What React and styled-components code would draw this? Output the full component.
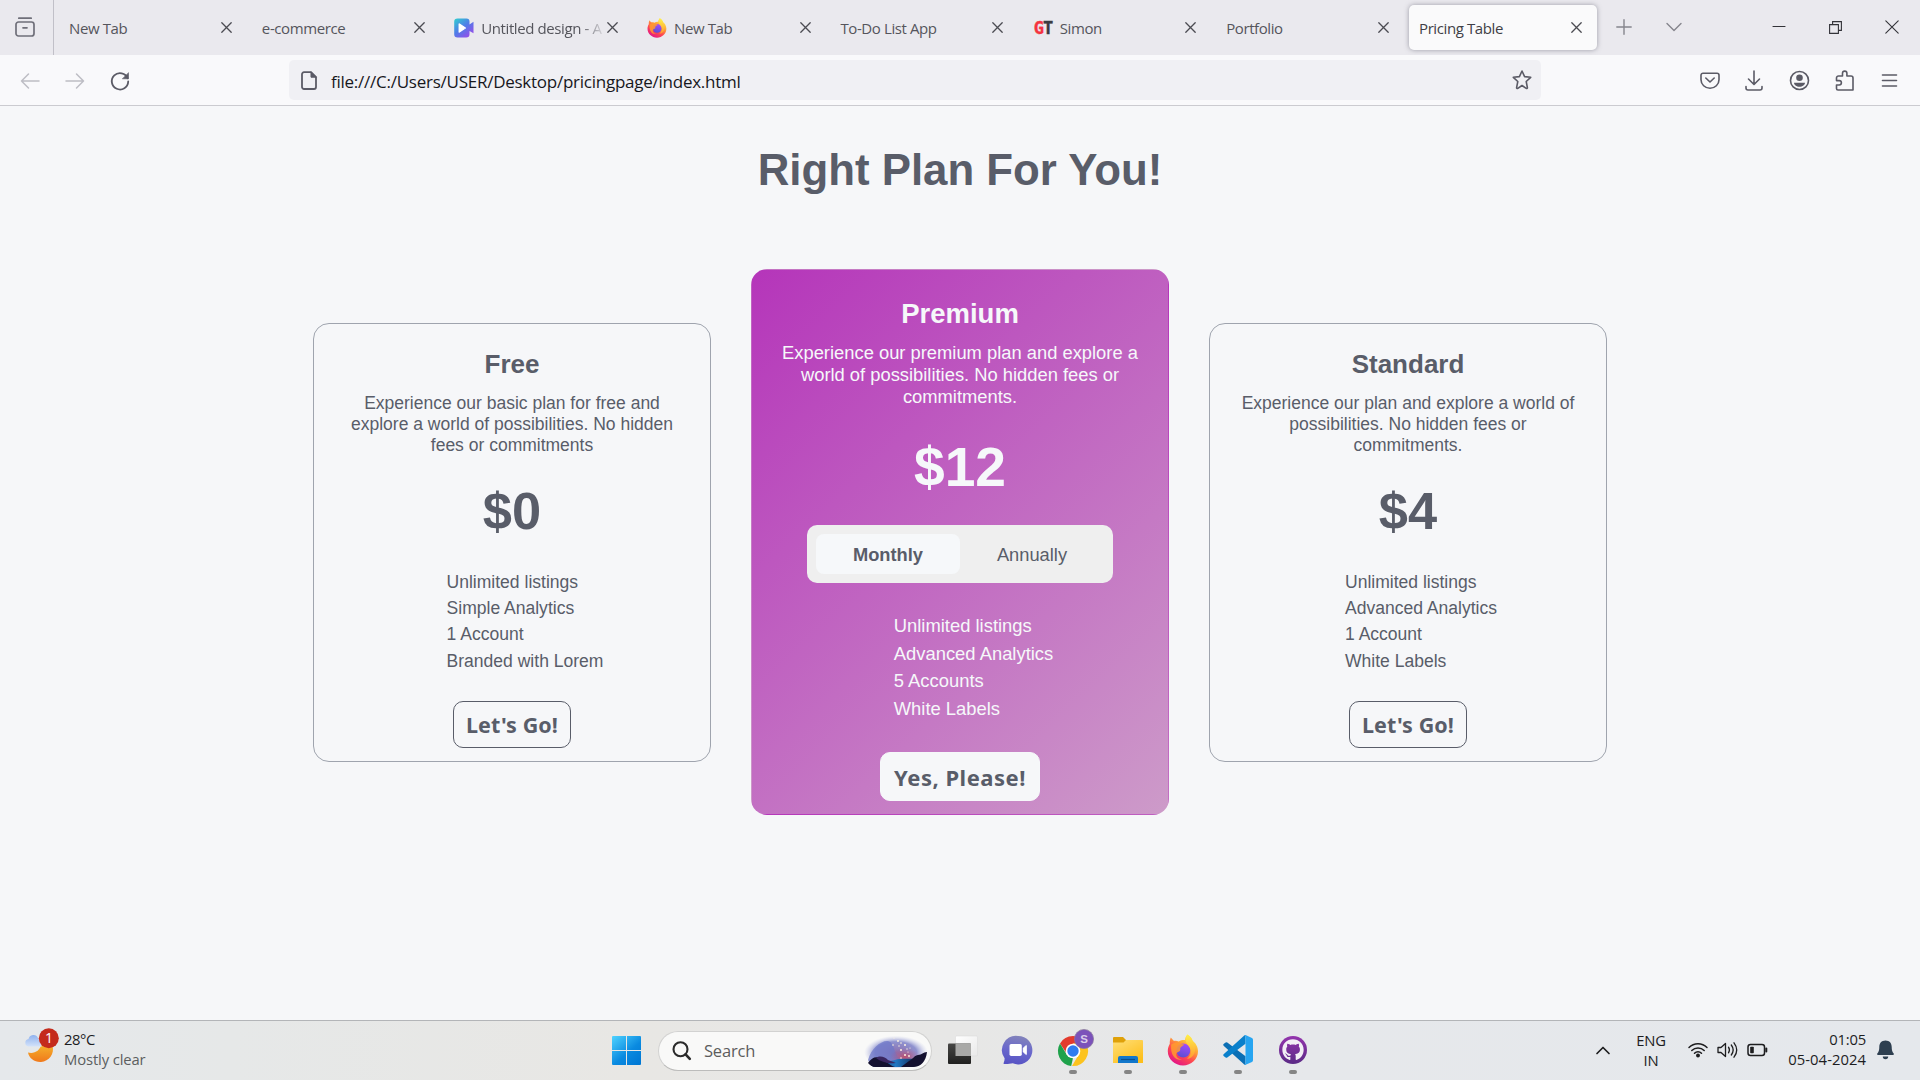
import React from "react";
import styled, { createGlobalStyle, css } from "styled-components";
import { FaGithub } from "react-icons/fa";

const UI = '"Open Sans", "Noto Sans", sans-serif';
const ARIAL = '"Liberation Sans", Arial, sans-serif';
const INK = "#595d69";
const PAPER = "#f6f7f9";

const Global = createGlobalStyle`
  * { box-sizing: border-box; }
  html, body { margin: 0; padding: 0; }
  body { width: 1920px; height: 1080px; overflow: hidden; background: ${PAPER}; }
  h1, h2, p, ul { margin: 0; padding: 0; }
  svg { display: block; flex: none; overflow: visible; }
`;

const Screen = styled.div`
  width: 1920px;
  height: 1080px;
  display: flex;
  flex-direction: column;
  background: ${PAPER};
  font-family: ${UI};
`;

/* ---------- browser chrome ---------- */

const TabStrip = styled.div`
  height: 55px;
  flex: none;
  display: flex;
  align-items: center;
  background: #eae9ee;
`;

const TabsMenu = styled.div`
  width: 54px;
  height: 55px;
  padding: 0 0 1px 15px;
  display: flex;
  align-items: center;
  border-right: 1px solid #c1c0c8;
  margin-right: 5px;
`;

const Tabs = styled.div`
  display: flex;
  gap: 4.86px;
`;

const Tab = styled.div`
  width: 188px;
  height: 45px;
  padding: 0 15px 0 ${(p) => (p.$icon ? 9.5 : 10)}px;
  display: flex;
  align-items: center;
  gap: 7px;
  border-radius: 5px;
  color: #55555c;
  ${(p) =>
    p.$active &&
    css`
      background: #fafafb;
      color: #3f3f46;
      box-shadow: 0 0 5px rgba(90, 90, 105, 0.55);
    `}
`;

const TabTitle = styled.span`
  flex: 1;
  min-width: 0;
  overflow: hidden;
  white-space: nowrap;
  font-size: 15px;
  line-height: 22px;
  letter-spacing: -0.4px;
  ${(p) =>
    p.$fade &&
    css`
      mask-image: linear-gradient(to right, #000 80%, transparent 100%);
      margin-right: -6px;
    `}
`;

const StripTools = styled.div`
  display: flex;
  align-items: center;
  margin-left: 19px;
  gap: 34px;
  padding-bottom: 1px;
`;

const WindowTools = styled.div`
  display: flex;
  align-items: center;
  margin-left: auto;
  margin-right: 21.5px;
  gap: 43px;
  padding-bottom: 1px;
`;

const Toolbar = styled.div`
  height: 51px;
  flex: none;
  display: flex;
  align-items: center;
  padding: 0 20px;
  background: #f9f9fb;
  border-bottom: 1px solid #cbcbd0;
`;

const NavGroup = styled.div`
  width: 269px;
  padding-top: 1px;
  display: flex;
  align-items: center;
  gap: 25px;
`;

const UrlBar = styled.div`
  width: 1252px;
  height: 40px;
  padding: 0 9px 0 12px;
  display: flex;
  align-items: center;
  border-radius: 5px;
  background: #f0f0f4;
`;

const Url = styled.span`
  flex: 1;
  margin-left: 14px;
  padding-top: 3px;
  font-size: 17px;
  letter-spacing: -0.25px;
  color: #17171c;
  white-space: nowrap;
`;

const ToolGroup = styled.div`
  margin-left: auto;
  padding-top: 1px;
  display: flex;
  align-items: center;
  gap: 23.6px;
`;

/* ---------- pricing page ---------- */

const Page = styled.main`
  flex: 1;
  display: flex;
  flex-direction: column;
  align-items: center;
  padding-top: 39px;
  font-family: ${ARIAL};
  color: ${INK};
`;

const Heading = styled.h1`
  font-size: 43.8px;
  line-height: 50px;
  font-weight: 700;
`;

const Plans = styled.div`
  margin-top: 74px;
  display: flex;
  align-items: center;
  gap: 40px;
`;

const Card = styled.section`
  width: ${(p) => (p.$featured ? 418 : 398)}px;
  height: ${(p) => (p.$featured ? 546 : 439)}px;
  padding-top: ${(p) => (p.$featured ? 28 : 25)}px;
  display: flex;
  flex-direction: column;
  align-items: center;
  border: 1px solid #9fa4ae;
  border-radius: 16px;
  ${(p) =>
    p.$featured &&
    css`
      border-color: transparent;
      color: #f6f8fa;
      background-image: linear-gradient(137deg, #b535ba, #cd9bc9);
    `}
`;

const PlanName = styled.h2`
  font-size: ${(p) => (p.$featured ? 27.5 : 26)}px;
  line-height: ${(p) => (p.$featured ? 32 : 30)}px;
`;

const Blurb = styled.p`
  margin-top: ${(p) => (p.$featured ? 12 : 14)}px;
  font-size: ${(p) => (p.$featured ? 18.35 : 17.5)}px;
  line-height: ${(p) => (p.$featured ? 22 : 21)}px;
  text-align: center;
  white-space: pre-line;
`;

const Price = styled.div`
  margin-top: ${(p) => (p.$featured ? 27 : 25)}px;
  font-size: ${(p) => (p.$featured ? 55.2 : 52.4)}px;
  line-height: ${(p) => (p.$featured ? 64 : 60)}px;
  font-weight: 700;
`;

const Toggle = styled.div`
  width: 306px;
  height: 58px;
  margin-top: 26px;
  padding: 9px;
  display: flex;
  border-radius: 10px;
  background: #efefef;
`;

const ToggleOption = styled.div`
  flex: 1;
  display: flex;
  align-items: center;
  justify-content: center;
  padding-top: 1.5px;
  border-radius: 8px;
  font-size: 18.3px;
  line-height: 22px;
  color: ${INK};
  ${(p) =>
    p.$on &&
    css`
      background: #f6f8fa;
      font-weight: 700;
    `}
`;

const Features = styled.ul`
  list-style: none;
  height: ${(p) => (p.$featured ? 111 : 105)}px;
  margin-top: ${(p) => (p.$featured ? 29.2 : 28)}px;
  padding-left: ${(p) => (p.$featured ? 27 : 26)}px;
  font-size: ${(p) => (p.$featured ? 18.4 : 17.55)}px;
  line-height: ${(p) => (p.$featured ? 27.6 : 26.4)}px;
`;

const Button = styled.button`
  width: ${(p) => (p.$featured ? 160 : 118)}px;
  height: ${(p) => (p.$featured ? 49 : 47)}px;
  margin-top: ${(p) => (p.$featured ? 28.8 : 27)}px;
  padding: 1px 0 0;
  border: 1px solid ${(p) => (p.$featured ? "#f6f8fa" : INK)};
  border-radius: 10px;
  background: ${PAPER};
  color: ${INK};
  font-family: "Noto Sans", sans-serif;
  font-weight: 700;
  font-size: ${(p) => (p.$featured ? 22 : 21.5)}px;
  letter-spacing: ${(p) => (p.$featured ? 0.5 : 0.1)}px;
  white-space: nowrap;
`;

/* ---------- taskbar ---------- */

const Taskbar = styled.footer`
  height: 60px;
  flex: none;
  display: flex;
  align-items: center;
  border-top: 1px solid #b3b5b8;
  background: linear-gradient(to right, #e5e8eb 0%, #e6e8e8 12%, #e8e7e4 33%, #e7e7e6 50%, #e6e8eb 68%, #e5e8ec 100%);
  color: #1d1d1f;
`;

const Weather = styled.div`
  width: 612px;
  padding-left: 24px;
  display: flex;
  align-items: center;
  gap: 4px;
`;

const Lines = styled.div`
  display: flex;
  flex-direction: column;
  align-items: ${(p) => p.$align || "flex-start"};
  width: ${(p) => p.$w || "auto"};
  padding-bottom: ${(p) => p.$lift ?? 3}px;
  font-size: 14.8px;
  line-height: 20px;
  white-space: nowrap;
`;

const Line = styled.span`
  color: ${(p) => (p.$dim ? "#5c5e60" : "#1d1d1f")};
  letter-spacing: ${(p) => p.$ls ?? -0.4}px;
`;

const SearchBox = styled.div`
  width: 274px;
  height: 40px;
  margin: 0 15px 0 17px;
  padding: 0 3px 0 13px;
  display: flex;
  align-items: center;
  border: 1px solid #d2d2d1;
  border-bottom-color: #bcbcbb;
  border-radius: 20px;
  background: #f9f9f8;
`;

const SearchText = styled.span`
  flex: 1;
  margin-left: 13px;
  font-size: 16.5px;
  letter-spacing: -0.2px;
  color: #5d5d5d;
`;

const Apps = styled.div`
  display: flex;
  gap: 23px;
`;

const AppSlot = styled.div`
  width: 32px;
  height: 59px;
  display: flex;
  flex-direction: column;
  align-items: center;
  padding-top: 13px;

  &::after {
    content: "";
    width: 8px;
    height: 4px;
    margin-top: 4px;
    border-radius: 2px;
    background: ${(p) => (p.$running ? "#858585" : "transparent")};
  }
`;

const GithubDisc = styled.div`
  width: 28px;
  height: 28px;
  margin: 2px;
  display: flex;
  align-items: center;
  justify-content: center;
  border-radius: 50%;
  background: linear-gradient(#9334ad, #5b2a86);
  color: #f2eef5;
`;

const Tray = styled.div`
  margin-left: auto;
  padding: 0 26px 1px 0;
  display: flex;
  align-items: center;
`;

const Status = styled.div`
  display: flex;
  align-items: center;
  gap: 9px;
  margin-left: -4px;
`;

const Bell = styled.div`
  margin-left: 11px;
`;

/* ---------- icons ---------- */

const Svg = ({ w, h, box, sw = 1.6, c = "#5b5b66", children, ...rest }) => (
  <svg width={w} height={h || w} viewBox={box || `0 0 ${w} ${h || w}`} fill="none" stroke={c} strokeWidth={sw} strokeLinecap="round" strokeLinejoin="round" {...rest}>
    {children}
  </svg>
);

const Cross = ({ size = 11, c = "#4b4b52", sw = 1.3 }) => (
  <Svg w={size} c={c} sw={sw}>
    <path d={`M.8 .8 ${size - 0.8} ${size - 0.8}M${size - 0.8} .8 .8 ${size - 0.8}`} />
  </Svg>
);

const FirefoxIcon = ({ size }) => (
  <svg width={size} height={size} viewBox="0 0 32 32">
    <defs>
      <linearGradient id="fxBody" x1=".8" y1=".05" x2=".25" y2=".95">
        <stop offset="0" stopColor="#fff44f" />
        <stop offset=".35" stopColor="#ffa436" />
        <stop offset=".65" stopColor="#ff4a4f" />
        <stop offset="1" stopColor="#e31587" />
      </linearGradient>
      <linearGradient id="fxGlobe" x1=".7" y1="0" x2=".4" y2="1">
        <stop offset="0" stopColor="#a54bff" />
        <stop offset="1" stopColor="#5b4fd0" />
      </linearGradient>
      <linearGradient id="fxFlame" x1="0" y1="0" x2="0" y2="1">
        <stop offset="0" stopColor="#fff14a" />
        <stop offset="1" stopColor="#ff9a30" />
      </linearGradient>
    </defs>
    <path fill="url(#fxBody)" d="M20.500.5c3.500 2.300 4.500 4.500 5.200 6.400 2.800 1.700 5.300 5.900 5.300 10.400C31 25.200 24.300 31.500 16 31.500S.8 25.200.8 17.300c0-3 .8-5.300 2-7.500-.2-2.300.2-4.300 1-6.300 1 1.300 2 2.500 3.200 3.400 1.700-.3 3.300 0 4.800.6 2.100-1.400 4.300-1.600 6.200-1.400.2-2.100.9-4 2.500-5.600Z" />
    <circle cx="16.300" cy="16.500" r="7" fill="url(#fxGlobe)" />
    <path fill="#ff9b2f" d="M4.200 10.500c3-2 6-2.600 8.300-1.600 1.300.6 2.500 1.300 4.700 1.400-.7 1.800-2.700 2-3.600 3.200-.9 1.200.3 2.200-.8 3.400-.8.9-2.500.7-3.300 2.300-1 3 1.600 6 5.400 6.300-6 1.500-11.900-4-10.700-15Z" opacity=".85" />
    <path fill="url(#fxFlame)" d="M20.500.5c3.500 2.300 4.500 4.500 5.200 6.400 2.500 3.300 3.600 8 1.600 12.500-1.500 3.300-4.300 5.200-7.500 5.600 3.500-2.600 4.600-6.200 3.600-9.700-.8-2.700-2.800-4.400-4.200-6.700C18.100 6 18.600 2.700 20.500.5Z" />
  </svg>
);

const VideoIcon = () => (
  <svg width="20" height="20" viewBox="0 0 20 20">
    <defs>
      <linearGradient id="clip" x1="0" y1="0" x2=".8" y2="1">
        <stop offset="0" stopColor="#2fd0cf" />
        <stop offset=".5" stopColor="#4f7de8" />
        <stop offset="1" stopColor="#9b4bea" />
      </linearGradient>
    </defs>
    <path fill="url(#clip)" d="M3.500.500h9a3 3 0 0 1 3 3v3l4-2.700v11.500l-4-2.300v3.200a3.300 3.300 0 0 1-3.300 3.300H3.500a3.300 3.300 0 0 1-3.300-3.300V3.800A3.300 3.300 0 0 1 3.500.5Z" />
    <path fill="#fff" stroke="#fff" strokeWidth="1.500" strokeLinejoin="round" d="m5.300 6 6 4-6 4Z" />
  </svg>
);

const GtMark = styled.span`
  width: 19px;
  margin-right: 1px;
  padding-left: 1px;
  font: 700 17px/20px "DejaVu Sans Mono", monospace;
  letter-spacing: -1.1px;
  color: #3b3b41;
  -webkit-text-stroke: 0.4px;
  b { color: #f5333f; }
`;

const WeatherIcon = () => (
  <svg width="36" height="44" viewBox="0 0 36 44">
    <defs>
      <linearGradient id="moon" x1="0" y1="0" x2="0" y2="1">
        <stop offset="0" stopColor="#f5b52c" />
        <stop offset="1" stopColor="#f0791c" />
      </linearGradient>
      <linearGradient id="cloud" x1="0" y1="0" x2="0" y2="1">
        <stop offset="0" stopColor="#8fb2ee" />
        <stop offset="1" stopColor="#d3e2fa" />
      </linearGradient>
    </defs>
    <path fill="url(#moon)" d="M4 23.500c6 1.600 12-1.500 13.500-8.500l11 2c2.300 7.500-3.500 15.500-11.500 16-6.500.3-12-3.800-13-9.500Z" />
    <path fill="url(#cloud)" d="M4.500 17.500a3.800 3.800 0 0 1 0-7.500 5 5 0 0 1 9.500-1l4 8.500Z" />
    <circle cx="24.800" cy="9.300" r="10" fill="#c42b1c" />
    <text x="24.900" y="14.200" textAnchor="middle" fontFamily="Open Sans" fontSize="14" fill="#fff">1</text>
  </svg>
);

const StartIcon = () => (
  <svg width="29" height="29" viewBox="0 0 29 29">
    <defs>
      <linearGradient id="win" gradientUnits="userSpaceOnUse" x1="0" y1="0" x2="25" y2="29">
        <stop offset="0" stopColor="#4fd3ff" />
        <stop offset=".6" stopColor="#0a8ae0" />
        <stop offset="1" stopColor="#0078d4" />
      </linearGradient>
    </defs>
    <path fill="url(#win)" d="M1 0h13v14H0V1a1 1 0 0 1 1-1ZM15 0h13a1 1 0 0 1 1 1v13H15ZM0 15h14v14H1a1 1 0 0 1-1-1ZM15 15h14v13a1 1 0 0 1-1 1H15Z" />
  </svg>
);

const SearchArt = () => (
  <svg width="64" height="34" viewBox="0 0 64 34">
    <defs>
      <radialGradient id="sky" cx=".5" cy=".55" r=".5">
        <stop offset="0" stopColor="#8c6fae" />
        <stop offset=".65" stopColor="#8f92cf" />
        <stop offset="1" stopColor="#c9cdea" stopOpacity="0" />
      </radialGradient>
      <radialGradient id="glow">
        <stop offset="0" stopColor="#c4475f" stopOpacity=".85" />
        <stop offset="1" stopColor="#b0568a" stopOpacity="0" />
      </radialGradient>
      <linearGradient id="sea" x1="0" y1="0" x2="1" y2="0">
        <stop offset="0" stopColor="#1a1a4a" />
        <stop offset=".5" stopColor="#1f78c4" />
        <stop offset="1" stopColor="#141336" />
      </linearGradient>
    </defs>
    <ellipse cx="32" cy="17" rx="32" ry="17" fill="url(#sky)" />
    <path fill="#6f78c8" opacity=".75" d="M4 26C7 14 18 6 24 7c7 2 5 12 12 18l-10 5H6Z" />
    <ellipse cx="41" cy="23" rx="15" ry="9" fill="url(#glow)" />
    <path fill="url(#sea)" d="M5 29c8-5 18 0 26-3s20 1 27-4c-2 8-6 11-12 11H12c-4 0-6-2-7-4Z" />
    <path fill="#14112f" d="M4 29c4-6 9-7 13-4 5 2 8 6 14 8H12c-4 0-6-2-8-4ZM63 18c-4 0-5 3-9 3-3 0-5 4-9 6l-8 6h12c8 0 13-6 14-15Z" />
    <path fill="#3a2660" d="M12 24c4-3 9-1 12 2l8 3c-8 1-15-1-20-5Z" />
    <g fill="#fff3e0">
      <circle cx="30" cy="4" r=".6" /><circle cx="34" cy="7" r=".9" /><circle cx="29" cy="11" r=".8" />
      <circle cx="37" cy="9" r=".8" /><circle cx="41" cy="11" r="1" /><circle cx="35" cy="12" r=".7" />
      <circle cx="43" cy="15" r=".7" /><circle cx="37" cy="16" r="1" /><circle cx="46" cy="14" r=".6" />
      <circle cx="41" cy="21" r="1" /><circle cx="45" cy="22" r=".9" /><circle cx="37" cy="24" r=".8" /><circle cx="44" cy="18" r=".6" />
    </g>
  </svg>
);

const TaskViewIcon = () => (
  <svg width="32" height="32" viewBox="0 0 32 32">
    <defs>
      <linearGradient id="tvd" x1="0" y1="0" x2="0" y2="1">
        <stop offset="0" stopColor="#474745" />
        <stop offset="1" stopColor="#20201f" />
      </linearGradient>
      <linearGradient id="tvl" x1="0" y1="0" x2="1" y2="1">
        <stop offset="0" stopColor="#fff" />
        <stop offset="1" stopColor="#e9e9e9" />
      </linearGradient>
    </defs>
    <rect x="8.500" y="2" width="22" height="20" rx="1" fill="url(#tvl)" stroke="#dcdcdc" strokeWidth=".6" />
    <rect x="1" y="9.500" width="23" height="20.500" rx="1" fill="url(#tvd)" />
    <rect x="8.500" y="9.500" width="15.500" height="12.500" fill="#a9a9a7" />
  </svg>
);

const ChatIcon = () => (
  <svg width="32" height="32" viewBox="0 0 32 32">
    <defs>
      <linearGradient id="chat" x1=".6" y1="0" x2=".4" y2="1">
        <stop offset="0" stopColor="#8384ba" />
        <stop offset=".5" stopColor="#6a68cc" />
        <stop offset="1" stopColor="#5753c4" />
      </linearGradient>
    </defs>
    <path fill="url(#chat)" d="M16 2a14.200 14.200 0 1 1-5.300 27.300C8 30 4 30.300 2 30c-.7-.1-.5-.9-.2-1.500.5-1 .9-2.500.8-4.200A14.200 14.200 0 0 1 16 2Z" />
    <rect x="7.500" y="10" width="12.300" height="12" rx="1.700" fill="#fff" />
    <path fill="#fff" stroke="#fff" strokeLinejoin="round" d="m21.300 14 3-2.500v9l-3-2.500Z" />
  </svg>
);

const ChromeIcon = () => (
  <svg width="32" height="32" viewBox="0 0 32 32">
    <path fill="#e33b2e" d="M3 9.500a15 15 0 0 1 26 0H16L10 20Z" />
    <path fill="#1fa24b" d="M3 9.500 9.800 20.800 16 24l-1.800 8A15 15 0 0 1 3 9.500Z" />
    <path fill="#fcc31e" d="M29 9.500A15 15 0 0 1 15 32l6.800-11.500L16 9.500Z" />
    <circle cx="16" cy="17" r="7.300" fill="#fff" />
    <circle cx="16" cy="17" r="5.700" fill="#2f7cf0" />
    <circle cx="27" cy="5" r="9.600" fill="#7b52ba" stroke="#8a7a9a" strokeWidth=".7" />
    <text x="27" y="9" textAnchor="middle" fontFamily="Liberation Sans" fontSize="11.500" fontWeight="700" fill="#d9cdea">S</text>
  </svg>
);

const FolderIcon = () => (
  <svg width="32" height="32" viewBox="0 0 32 32">
    <defs>
      <linearGradient id="fold" x1="0" y1="0" x2=".7" y2="1">
        <stop offset="0" stopColor="#ffdf78" />
        <stop offset="1" stopColor="#fdbf1c" />
      </linearGradient>
    </defs>
    <path fill="#dfa10a" d="M2 3h9l3 3v4H1V4a1 1 0 0 1 1-1Z" />
    <path fill="url(#fold)" d="M14 6h16a1 1 0 0 1 1 1v22H1V8.500h10.500Z" />
    <path fill="#1277cb" d="M6 29v-5a2 2 0 0 1 2-2h16a2 2 0 0 1 2 2v5Z" />
    <path stroke="#0a4f8e" strokeWidth="1.200" d="M9 25.500h14" />
  </svg>
);

const CodeIcon = () => (
  <svg width="32" height="32" viewBox="0 0 32 32">
    <path fill="#0b6fb5" d="M3.600 8.600a1.300 1.300 0 0 1 1.700 0L23.500 22.300V31c-.6 0-1-.2-1.500-.7L1.600 11.700a1.200 1.200 0 0 1 0-1.700Z" />
    <path fill="#0a80cb" d="M3.600 23.400a1.300 1.300 0 0 0 1.700 0L23.500 9.700V1c-.6 0-1 .2-1.500.7L1.600 20.300a1.200 1.200 0 0 0 0 1.700Z" />
    <path fill="#27a5f1" d="M23 31c-.5.100-.8 0-1.300-.7.700.7 1.800.2 1.800-.8v-27c0-1-1.100-1.500-1.800-.8.500-.7.800-.8 1.800-.6l6.500 3c.6.300 1 .9 1 1.600v20.600c0 .7-.4 1.300-1 1.600Z" />
  </svg>
);

const TABS = [
  { title: "New Tab" },
  { title: "e-commerce" },
  { title: "Untitled design - A", icon: <VideoIcon />, fade: true },
  { title: "New Tab", icon: <FirefoxIcon size={20} /> },
  { title: "To-Do List App" },
  { title: "Simon", icon: <GtMark><b>G</b>T</GtMark> },
  { title: "Portfolio" },
  { title: "Pricing Table", active: true },
];

const PLANS = [
  {
    name: "Free",
    blurb: "Experience our basic plan for free and\nexplore a world of possibilities. No hidden\nfees or commitments",
    price: "$0",
    features: ["Unlimited listings", "Simple Analytics", "1 Account", "Branded with Lorem"],
    action: "Let's Go!",
  },
  {
    name: "Premium",
    featured: true,
    blurb: "Experience our premium plan and explore a\nworld of possibilities. No hidden fees or\ncommitments.",
    price: "$12",
    features: ["Unlimited listings", "Advanced Analytics", "5 Accounts", "White Labels"],
    action: "Yes, Please!",
  },
  {
    name: "Standard",
    blurb: "Experience our plan and explore a world of\npossibilities. No hidden fees or\ncommitments.",
    price: "$4",
    features: ["Unlimited listings", "Advanced Analytics", "1 Account", "White Labels"],
    action: "Let's Go!",
  },
];

const Browser = () => (
  <>
    <TabStrip>
      <TabsMenu>
        <Svg w={20} c="#6f6f79" sw={1.7}>
          <path d="M3.800 1.200h12.400M3.500 5h13a2.500 2.500 0 0 1 2.500 2.500v9a2.500 2.500 0 0 1-2.500 2.500h-13A2.500 2.500 0 0 1 1 16.500v-9A2.500 2.500 0 0 1 3.500 5ZM8 10.800h4" />
        </Svg>
      </TabsMenu>
      <Tabs>
        {TABS.map((t, i) => (
          <Tab key={i} $active={t.active} $icon={!!t.icon}>
            {t.icon}
            <TabTitle $fade={t.fade}>{t.title}</TabTitle>
            <Cross />
          </Tab>
        ))}
      </Tabs>
      <StripTools>
        <Svg w={16} c="#85858d" sw={1.4}><path d="M8 .8v14.400M.8 8h14.400" /></Svg>
        <Svg w={16} h={10} c="#85858d" sw={1.4}><path d="m1 1.500 7 7 7-7" /></Svg>
      </StripTools>
      <WindowTools>
        <Svg w={14} h={14} c="#333338" sw={1.1}><path d="M1 6.500h12" /></Svg>
        <Svg w={13} c="#333338" sw={1.1} strokeLinejoin="miter"><path d="M.6 3.600h8.800v8.800H.6ZM3.600 3.600V.6h8.800v8.800h-3" /></Svg>
        <Cross size={14} c="#333338" sw={1.1} />
      </WindowTools>
    </TabStrip>
    <Toolbar>
      <NavGroup>
        <Svg w={20} c="#bdbdc4" sw={1.5}><path d="M19 10H1.500M8.500 3l-7 7 7 7" /></Svg>
        <Svg w={20} c="#bdbdc4" sw={1.5}><path d="M1 10h17.500M11.500 3l7 7-7 7" /></Svg>
        <Svg w={20} sw={1.8}><path d="M17.600 7.200A8.200 8.200 0 1 0 18.200 10.500" /><path d="M18.500 2v5.800h-5.800Z" fill="#5b5b66" strokeWidth=".6" /></Svg>
      </NavGroup>
      <UrlBar>
        <Svg w={16} h={19} sw={1.8}><path d="M3 1.200h7l5 5V16a2 2 0 0 1-2 2H3a2 2 0 0 1-2-2V3.200a2 2 0 0 1 2-2Z" /><path d="M10 1.200v5h5Z" fill="#5b5b66" strokeWidth="1" /></Svg>
        <Url>file:///C:/Users/USER/Desktop/pricingpage/index.html</Url>
        <Svg w={20} sw={1.6}><path d="m10 1 2.600 5.600 6.100.7-4.500 4.200 1.200 6.100c.1.800-.5 1.200-1.200.8L10 15.500l-4.200 2.900c-.7.400-1.300 0-1.200-.8l1.200-6.100L1.300 7.300l6.100-.7Z" /></Svg>
      </UrlBar>
      <ToolGroup>
        <Svg w={20} h={18}><path d="M3 1.200h14a2 2 0 0 1 2 2v4.500a9 8.500 0 0 1-18 0V3.200a2 2 0 0 1 2-2ZM5.800 6l4.200 4 4.200-4" /></Svg>
        <Svg w={22} h={20}><path d="M11 0v13M5.500 8l5.500 5.500L16.500 8M3 15.500V17a2 2 0 0 0 2 2h12a2 2 0 0 0 2-2v-1.500" /></Svg>
        <Svg w={21}><circle cx="10.500" cy="10.500" r="9" /><circle cx="10.500" cy="7.800" r="3.300" fill="#5b5b66" stroke="none" /><path d="M5 12.800h11c0 2.300-2.500 4-5.500 4s-5.500-1.700-5.500-4Z" fill="#5b5b66" stroke="none" /></Svg>
        <Svg w={22} h={21}><path d="M5.500 6h4V3.300a2.200 2.200 0 0 1 4.400 0V6H18a2 2 0 0 1 2 2v12H5a1.500 1.500 0 0 1-1.500-1.500V15h2.700a2.200 2.200 0 0 0 0-4.400H3.500V8a2 2 0 0 1 2-2Z" /></Svg>
        <Svg w={21} h={18}><path d="M3.500 3h14M3.500 8.500h14M3.500 14h14" /></Svg>
      </ToolGroup>
    </Toolbar>
  </>
);

const Plan = ({ name, featured, blurb, price, features, action }) => (
  <Card $featured={featured}>
    <PlanName $featured={featured}>{name}</PlanName>
    <Blurb $featured={featured}>{blurb}</Blurb>
    <Price $featured={featured}>{price}</Price>
    {featured && (
      <Toggle>
        <ToggleOption $on>Monthly</ToggleOption>
        <ToggleOption>Annually</ToggleOption>
      </Toggle>
    )}
    <Features $featured={featured}>
      {features.map((f) => (
        <li key={f}>{f}</li>
      ))}
    </Features>
    <Button $featured={featured}>{action}</Button>
  </Card>
);

const DesktopBar = () => (
  <Taskbar>
    <Weather>
      <WeatherIcon />
      <Lines>
        <Line>28°C</Line>
        <Line $dim $ls={-0.12}>Mostly clear</Line>
      </Lines>
    </Weather>
    <StartIcon />
    <SearchBox>
      <Svg w={19} c="#2b2b2b" sw={2.1}><circle cx="8.500" cy="8.200" r="7" /><path d="m13.600 13.300 4.200 4.500" strokeWidth="2.600" /></Svg>
      <SearchText>Search</SearchText>
      <SearchArt />
    </SearchBox>
    <Apps>
      <AppSlot><TaskViewIcon /></AppSlot>
      <AppSlot><ChatIcon /></AppSlot>
      <AppSlot $running><ChromeIcon /></AppSlot>
      <AppSlot $running><FolderIcon /></AppSlot>
      <AppSlot $running><FirefoxIcon size={32} /></AppSlot>
      <AppSlot $running><CodeIcon /></AppSlot>
      <AppSlot $running><GithubDisc><FaGithub size={22} /></GithubDisc></AppSlot>
    </Apps>
    <Tray>
      <Svg w={14} h={9} c="#1d1d1f" sw={1.7}><path d="m1 7.500 6-6 6 6" /></Svg>
      <Lines $align="center" $w="82px" $lift={1}>
        <Line $ls={-0.2}>ENG</Line>
        <Line $ls={-0.2}>IN</Line>
      </Lines>
      <Status>
        <Svg w={20} h={16} c="#1d1d1f" sw={1.5}><path d="M1 5.500a12.700 12.700 0 0 1 18 0M3.800 8.500a8.800 8.800 0 0 1 12.400 0M6.500 11.300a5 5 0 0 1 7 0" /><circle cx="10" cy="13.500" r="1.200" fill="#1d1d1f" /></Svg>
        <Svg w={21} h={18} c="#1d1d1f" sw={1.3}><path d="M1 6.500h3l4.500-4v13L4 11.500H1ZM11.500 6.200c1.200 1.800 1.200 3.800 0 5.600M14.300 4c2.400 3.200 2.400 6.800 0 10M17 1.800c3.500 4.600 3.500 9.800 0 14.400" /></Svg>
        <Svg w={21} h={14} c="#1d1d1f" sw={1.5}><rect x="1" y="1.500" width="16.500" height="11" rx="2.500" /><path d="M19.300 5.500v3" strokeWidth="2" /><rect x="3.200" y="3.700" width="3.600" height="6.600" rx=".8" fill="#1d1d1f" stroke="none" /></Svg>
      </Status>
      <Lines $align="flex-end" $w="98px" $lift={2}>
        <Line $ls={-0.2}>01:05</Line>
        <Line $ls={0.05}>05-04-2024</Line>
      </Lines>
      <Bell>
        <Svg w={17} h={20} c="none"><path fill="#2e3f50" d="M8.500.500c4 0 6.200 2.800 6.200 6.500 0 3 .5 5 2 6.500.5.700.1 1.500-.7 1.500H1c-.8 0-1.200-.8-.7-1.500 1.500-1.500 2-3.500 2-6.500 0-3.700 2.200-6.500 6.200-6.500ZM5.800 16.500h5.400a2.700 2.700 0 0 1-5.400 0Z" /></Svg>
      </Bell>
    </Tray>
  </Taskbar>
);

export default function App() {
  return (
    <Screen>
      <Global />
      <Browser />
      <Page>
        <Heading>Right Plan For You!</Heading>
        <Plans>
          {PLANS.map((p) => (
            <Plan key={p.name} {...p} />
          ))}
        </Plans>
      </Page>
      <DesktopBar />
    </Screen>
  );
}
